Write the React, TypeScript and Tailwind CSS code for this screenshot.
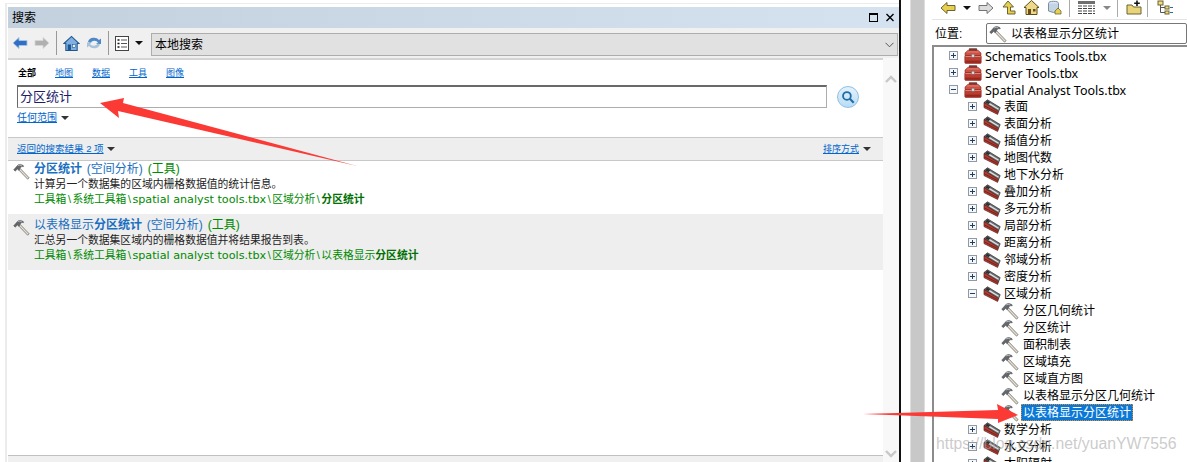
const CJK = "font-['Liberation_Sans','Noto_Sans_CJK_SC',sans-serif]";

function Hammer({ size = 20 }: { size?: number }) {
  return (
    <svg width={size} height={size} viewBox="0 0 20 20" className="shrink-0">
      <path d="M8.6 6.6 L19 17.4 L17.2 19 L6.8 8.2 Z" fill="#e6dfd0" stroke="#6a6a66" strokeWidth="0.9" />
      <path d="M0.8 8 L6 2.2 Q8.6 0.8 12 2.8 L12.6 4.2 L9.8 4.2 L8.6 6 L6.7 8.6 L5.3 7 L2.6 9.6 Z" fill="#63676b" stroke="#3c3f42" strokeWidth="0.5" />
      <path d="M5.6 3.2 Q8 2 10.4 3.2" fill="none" stroke="#c3c7ca" strokeWidth="0.9" />
    </svg>
  );
}

function Toolbox() {
  return (
    <svg width={18} height={16} viewBox="0 0 18 16" className="shrink-0">
      <path d="M5 3.5 V1.2 Q5 0.4 6 0.4 H12 Q13 0.4 13 1.2 V3.5 M6.4 3.5 V1.8 H11.6 V3.5" fill="#8a3a32" stroke="#5a3a36" strokeWidth="0.5" />
      <path d="M1 5 L3.6 2.6 H14.4 L17 5 V7.6 H1 Z" fill="#cf5044" stroke="#8f2a22" strokeWidth="0.6" />
      <path d="M3.8 3.2 H14.2 L15.6 4.6 H2.4 Z" fill="#e07a6c" />
      <rect x="0.8" y="7.6" width="16.4" height="7.8" rx="0.8" fill="#bc3e33" stroke="#812319" strokeWidth="0.6" />
      <rect x="1.4" y="8" width="15.2" height="1" fill="#dd8478" />
      <rect x="1.4" y="12.6" width="15.2" height="2.2" fill="#98271e" />
      <rect x="7.6" y="6.2" width="2.8" height="3" fill="#dcdcdc" stroke="#6c6c6c" strokeWidth="0.5" />
    </svg>
  );
}

function Toolset() {
  return (
    <svg width={18} height={16} viewBox="0 0 18 16" className="shrink-0">
      <path d="M1 3.5 L4.5 0.8 L17.2 8.6 L15.6 12.6 Z" fill="#6e7073" stroke="#2f2f2f" strokeWidth="0.7" />
      <path d="M1 3.5 L1 8.6 L14.6 15.4 L15.6 12.6 Z" fill="#b23c32" stroke="#551e1a" strokeWidth="0.7" />
      <path d="M4.6 3.6 L15.6 10.2" stroke="#e4e4e4" strokeWidth="1.3" />
      <path d="M1.6 7 L14.8 13.8" stroke="#7a221b" strokeWidth="1" />
      <path d="M2.4 3.6 L4.4 1.6 L7.4 3.4 L5.4 5.2 Z" fill="#2f3133" />
    </svg>
  );
}

function Expander({ open }: { open?: boolean }) {
  return (
    <span className="relative flex h-[9px] w-[9px] shrink-0 items-center justify-center border border-[#8f9aa5] bg-[#f7f7f7]">
      <span className="h-px w-[5px] bg-[#1b3f6e]" />
      {!open && <span className="absolute h-[5px] w-px bg-[#1b3f6e]" />}
    </span>
  );
}

function ArrowBtn({ dir, fill, stroke }: { dir: "l" | "r"; fill: string; stroke: string }) {
  return (
    <svg width={16} height={14} viewBox="0 0 16 14" className="shrink-0">
      <path d={dir === "l" ? "M1 7 L7 1.5 V4.5 H15 V9.5 H7 V12.5 Z" : "M15 7 L9 1.5 V4.5 H1 V9.5 H9 V12.5 Z"} fill={fill} stroke={stroke} strokeWidth="0.9" />
    </svg>
  );
}

function Caret({ color = "#333" }: { color?: string }) {
  return <span className="inline-block h-0 w-0 border-x-[4px] border-t-[4px] border-x-transparent" style={{ borderTopColor: color }} />;
}

function House() {
  return (
    <svg width={17} height={17} viewBox="0 0 18 18" className="shrink-0">
      <path d="M1 9 L9 1.5 L17 9 L15 9 V16.5 H3 V9 Z" fill="#7fb0e0" stroke="#1f5590" strokeWidth="1.1" />
      <rect x="5" y="10" width="3.4" height="6.5" fill="#1f5590" />
      <rect x="10" y="10" width="3.4" height="3" fill="#e8f1fa" stroke="#1f5590" strokeWidth="0.6" />
    </svg>
  );
}

function Tab({ children }: { children: string }) {
  return <a className="w-[37px] text-[9px] leading-none text-[#0066cc] underline">{children}</a>;
}

function Sep() {
  return <span className="px-[1.5px]">\</span>;
}

function Result({ shaded, titleStart, titleBold, desc, pathTail, pathBold }: { shaded?: boolean; titleStart?: string; titleBold: string; desc: string; pathTail: string; pathBold: string }) {
  return (
    <div className={`flex gap-[4px] pl-[5px] ${shaded ? "h-[56px] bg-[#eeeeee] pt-[4px]" : "h-[53px] pt-px"}`}>
      <div className="pt-[1px]"><Hammer size={17} /></div>
      <div className="flex flex-col text-[10.8px] leading-[14px]">
        <div className="h-[15px] text-[12px] leading-[15px] text-[#1a6fc0] [word-spacing:1.5px]">
          {titleStart}<b className="font-bold">{titleBold}</b> (空间分析) <span className="text-[#008a00]">(工具)</span>
        </div>
        <div className="h-[14px] text-[#222]">{desc}</div>
        <div className="pt-px text-[#008a00]">工具箱<Sep />系统工具箱<Sep /><span className="font-['DejaVu_Sans'] text-[11.2px]">spatial analyst tools.tbx</span><Sep />区域分析<Sep />{pathTail}<b className="font-bold text-[#007000]">{pathBold}</b></div>
      </div>
    </div>
  );
}

const sets1 = ["表面", "表面分析", "插值分析", "地图代数", "地下水分析", "叠加分析", "多元分析", "局部分析", "距离分析", "邻域分析", "密度分析"];
const tools = ["分区几何统计", "分区统计", "面积制表", "区域填充", "区域直方图", "以表格显示分区几何统计"];
const sets2 = ["数学分析", "水文分析", "太阳辐射"];

function Row({ indent, children }: { indent: string; children: React.ReactNode }) {
  return <div className={`flex h-[17px] shrink-0 items-center ${indent}`}>{children}</div>;
}

function SearchPanel() {
  return (
    <div className="h-full w-[901px] shrink-0 border-r-2 border-[#111] pl-[5px] pt-[3px]">
      <div className="flex h-full flex-col border-l-2 border-t border-[#ececec] pl-px pt-[3px]">
        <div className="flex h-[21px] shrink-0 items-center justify-between bg-gradient-to-r from-[#c3d0dd] to-[#d5e3f1] pl-1 text-[12px] text-black">
          <span>搜索</span>
          <span className="flex items-center gap-[8px] pr-[5px]">
            <span className="h-[9px] w-[9px] border border-t-2 border-black" />
            <svg width={8} height={9} viewBox="0 0 8 9"><path d="M0.5 1 L7.5 8 M7.5 1 L0.5 8" stroke="#000" strokeWidth="1.4" /></svg>
          </span>
        </div>
        <div className="flex h-[30px] shrink-0 items-center bg-[#f0f0f0] pl-[4px]">
          <ArrowBtn dir="l" fill="#2f6fc4" stroke="#a9c4e4" />
          <span className="w-[6px]" />
          <ArrowBtn dir="r" fill="#b0b0b0" stroke="#d6d6d6" />
          <span className="mx-[6px] h-6 w-px bg-[#999]" />
          <House />
          <svg width={16} height={16} viewBox="0 0 16 16" className="ml-[6px]">
            <path d="M2 7 A6 5 0 0 1 13 5 L15 3.5 V9 H10 L12 7.4 A4 3 0 0 0 4.5 8 Z" fill="#4f88c6" />
            <path d="M14 9 A6 5 0 0 1 3 11 L1 12.5 V7.6 H6 L4 9 A4 3 0 0 0 11.5 8.5 Z" fill="#a8c2dc" />
          </svg>
          <span className="mx-[6px] h-6 w-px bg-[#999]" />
          <svg width={14} height={15} viewBox="0 0 14 15" className="shrink-0">
            <rect x="0.5" y="0.5" width="13" height="14" fill="#fff" stroke="#444" />
            <path d="M6 4 H12 M6 7.5 H12 M6 11 H12" stroke="#555" />
            <path d="M2.5 4 H4.5 M2.5 7.5 H4.5 M2.5 11 H4.5" stroke="#111" strokeWidth="1.6" />
          </svg>
          <span className="ml-[6px] mr-[5px] flex"><Caret color="#111" /></span>
          <div className="mb-[2px] ml-[3px] mr-px flex h-[23px] flex-1 items-center justify-between self-end border border-[#adadad] bg-[#e1e1e1] pl-[3px] pr-[3px] text-[12px] text-black">
            <span>本地搜索</span>
            <svg width={9} height={6} viewBox="0 0 9 6"><path d="M0.5 0.8 L4.5 4.8 L8.5 0.8" fill="none" stroke="#555" strokeWidth="1" /></svg>
          </div>
        </div>
        <div className="flex min-h-0 flex-1">
          <div className="flex min-w-0 flex-1 flex-col border-t-2 border-[#d4d4d4]">
            <div className="flex h-[77px] shrink-0 flex-col pl-[10px]">
              <div className="flex h-[24px] items-end pb-[6px]">
                <b className="w-[37px] text-[9px] font-bold leading-none text-black">全部</b>
                <Tab>地图</Tab><Tab>数据</Tab><Tab>工具</Tab><Tab>图像</Tab>
              </div>
              <div className="flex items-center pt-px">
                <div className="flex h-[23px] w-[810px] -translate-x-px items-center border border-t-2 border-[#adadad] border-l-[#696969] border-t-[#696969] pl-[2px] text-[13px] text-[#1c1c6c]">分区统计</div>
                <span className="ml-[9px] flex h-[22px] w-[22px] items-center justify-center rounded-full border border-[#8ebfe6] bg-gradient-to-b from-[#e4f2fc] to-[#b9dcf5]">
                  <svg width={14} height={14} viewBox="0 0 13 13"><circle cx="5.5" cy="5.5" r="3.6" fill="none" stroke="#1f6ea8" strokeWidth="1.7" /><path d="M8.2 8.2 L11.8 11.8" stroke="#1f6ea8" strokeWidth="2" /></svg>
                </span>
              </div>
              <div className="flex -translate-x-px items-center gap-[4px] pt-[3px]">
                <a className="text-[10px] leading-[14px] text-[#0066cc] underline">任何范围</a>
                <Caret />
              </div>
            </div>
            <div className="flex h-[24px] shrink-0 items-center justify-between border-y border-[#c8c8c8] bg-[#eeeeee] pl-[9px] pr-[12px]">
              <span className="flex items-center gap-[3px]">
                <a className="text-[9.5px] leading-none text-[#0066cc] underline">返回的搜索结果 2 项</a><Caret />
              </span>
              <span className="flex items-center gap-[4px]">
                <a className="text-[9px] leading-none text-[#0066cc] underline">排序方式</a><Caret />
              </span>
            </div>
            <Result titleBold="分区统计" desc="计算另一个数据集的区域内栅格数据值的统计信息。" pathTail="" pathBold="分区统计" />
            <Result shaded titleStart="以表格显示" titleBold="分区统计" desc="汇总另一个数据集区域内的栅格数据值并将结果报告到表。" pathTail="以表格显示" pathBold="分区统计" />
            <div className="flex-1" />
            <div className="h-[7px] border-t border-[#c0c0c0] bg-[#f0f0f0]" />
          </div>
          <div className="flex w-[16px] shrink-0 flex-col items-center justify-between bg-[#f8f8f8] pb-[4px] pt-[17px]">
            <svg width={12} height={8} viewBox="0 0 12 8"><path d="M1 7 L6 2 L11 7" fill="none" stroke="#c8c8c8" strokeWidth="2.4" /></svg>
            <svg width={12} height={8} viewBox="0 0 12 8"><path d="M1 1 L6 6 L11 1" fill="none" stroke="#c8c8c8" strokeWidth="2.4" /></svg>
          </div>
        </div>
      </div>
    </div>
  );
}

function CatalogPanel() {
  return (
    <div className="flex min-w-0 flex-1 flex-col">
      <div className="flex h-[20px] shrink-0 items-center border-b border-[#e4e4e4] pb-[4px] pl-[8px]">
        <ArrowBtn dir="l" fill="#e8cf4f" stroke="#5f5526" />
        <span className="ml-[7px] flex"><Caret color="#111" /></span>
        <span className="ml-[7px] flex"><ArrowBtn dir="r" fill="#dcdcdc" stroke="#666" /></span>
        <svg width={15} height={15} viewBox="0 0 15 15" className="ml-[7px] shrink-0"><path d="M7 1 L12.5 7 H9.5 V11 H14 V14 H6.5 V7 H2 Z" fill="#e6d050" stroke="#5f5526" strokeWidth="0.9" /></svg>
        <svg width={17} height={17} viewBox="0 0 17 17" className="ml-[7px] shrink-0"><path d="M1 8.5 L8.5 1.5 L16 8.5 H14 V15.5 H3 V8.5 Z" fill="#ecd98a" stroke="#5f4c18" /><rect x="5" y="10" width="3" height="5.5" fill="#6a4d1a" /><rect x="10" y="10" width="2.5" height="2.5" fill="#6a4d1a" /></svg>
        <svg width={15} height={15} viewBox="0 0 15 15" className="ml-[7px] shrink-0"><ellipse cx="6.5" cy="3.5" rx="5" ry="2.2" fill="#dbe7f2" stroke="#7d8ea0" /><path d="M1.5 3.5 V11 Q6.5 14 11.5 11 V3.5" fill="#c3d4e4" stroke="#7d8ea0" /><path d="M8 11 L11 8 L14 11 V14 H8 Z" fill="#e6d050" stroke="#5f5526" strokeWidth="0.7" /></svg>
        <span className="ml-[7px] h-[18px] w-px shrink-0 bg-[#aaa]" />
        <svg width={17} height={14} viewBox="0 0 17 14" className="ml-[8px] shrink-0"><rect x="0" y="0" width="17" height="3" fill="#6e6e6e" /><path d="M0 5 H17 M0 7.5 H17 M0 10 H17 M0 12.5 H17" stroke="#444" strokeDasharray="4 1" /></svg>
        <span className="ml-[8px] flex"><Caret color="#888" /></span>
        <span className="ml-[6px] h-[18px] w-px shrink-0 bg-[#aaa]" />
        <svg width={16} height={15} viewBox="0 0 16 15" className="ml-[8px] shrink-0"><path d="M1 5 H6 L7.5 7 H15 V14 H1 Z" fill="#e9d47a" stroke="#6d6230" /><path d="M11 0.5 V6 M8.2 3.2 H13.8" stroke="#111" strokeWidth="1.6" /></svg>
        <span className="ml-[5px] h-[18px] w-px shrink-0 bg-[#aaa]" />
        <svg width={16} height={15} viewBox="0 0 16 15" className="ml-[9px] shrink-0"><rect x="1" y="1" width="5" height="4" fill="#f0dc80" stroke="#6d6230" /><rect x="8" y="6" width="4" height="3" fill="#f0dc80" stroke="#6d6230" /><rect x="8" y="11" width="4" height="3" fill="#f0dc80" stroke="#6d6230" /><path d="M3.5 5 V12.5 H8 M3.5 7.5 H8" fill="none" stroke="#555" /><path d="M13 7.5 H16 M13 12.5 H16" stroke="#1f6ea8" /></svg>
      </div>
      <div className="flex h-[25px] shrink-0 items-center pl-[3px] pt-[2px] text-[12px] text-black">
        <span className="w-[51px]">位置:</span>
        <div className="flex h-[21px] flex-1 items-center gap-[4px] rounded-[2px] border border-[#777] pl-[2px]">
          <Hammer size={18} /><span>以表格显示分区统计</span>
        </div>
      </div>
      <div className="flex min-h-0 flex-1 flex-col overflow-hidden border-l-2 border-t-2 border-[#8c8c8c] text-[12px] text-black">
        <Row indent="pl-[15px]"><Expander /><span className="ml-[6px]"><Toolbox /></span><span className="ml-[3px] pt-[2px] font-['Noto_Sans'] text-[12.5px] leading-[15px]">Schematics Tools.tbx</span></Row>
        <Row indent="pl-[15px]"><Expander /><span className="ml-[6px]"><Toolbox /></span><span className="ml-[3px] pt-[2px] font-['Noto_Sans'] text-[12.5px] leading-[15px]">Server Tools.tbx</span></Row>
        <Row indent="pl-[15px]"><Expander open /><span className="ml-[6px]"><Toolbox /></span><span className="ml-[3px] pt-[2px] font-['Noto_Sans'] text-[12.5px] leading-[15px]">Spatial Analyst Tools.tbx</span></Row>
        {sets1.map((s) => <Row key={s} indent="pl-[34px]"><Expander /><span className="ml-[6px]"><Toolset /></span><span className="ml-[3px]">{s}</span></Row>)}
        <Row indent="pl-[34px]"><Expander open /><span className="ml-[6px]"><Toolset /></span><span className="ml-[3px]">区域分析</span></Row>
        {tools.map((s) => <Row key={s} indent="pl-[67px]"><Hammer size={18} /><span className="ml-[4px]">{s}</span></Row>)}
        <Row indent="pl-[67px]"><Hammer size={18} /><span className="ml-[2px] flex h-[17px] items-center border border-dotted border-[#e08a2a] bg-[#0a78d7] px-px text-white">以表格显示分区统计</span></Row>
        {sets2.map((s) => <Row key={s} indent="pl-[34px]"><Expander /><span className="ml-[6px]"><Toolset /></span><span className="ml-[3px]">{s}</span></Row>)}
      </div>
    </div>
  );
}

export default function App() {
  return (
    <div className={`relative flex h-[462px] w-[1187px] overflow-hidden bg-white ${CJK}`}>
      <SearchPanel />
      <div className="flex h-full w-[31px] shrink-0 pl-[9px] pr-[7px]"><div className="h-full flex-1 border-x border-[#dedede] bg-[#c8c8c8]" /></div>
      <CatalogPanel />
      <svg width={1187} height={462} viewBox="0 0 1187 462" className="pointer-events-none absolute left-0 top-0">
        <path d="M100 103 L124 98 L123 103 L357 166 L118 111 L119 118 Z" fill="#fb3a36" />
        <path d="M863 414 L998 410 L997 404 L1018 415 L998 423 L998 419 Z" fill="#fb3a36" />
      </svg>
      <span className="pointer-events-none absolute left-[936px] top-[436px] font-['Liberation_Sans'] text-[15.8px] leading-none text-[#a8a8a8]/60">https://blog.csdn.net/yuanYW7556</span>
    </div>
  );
}
